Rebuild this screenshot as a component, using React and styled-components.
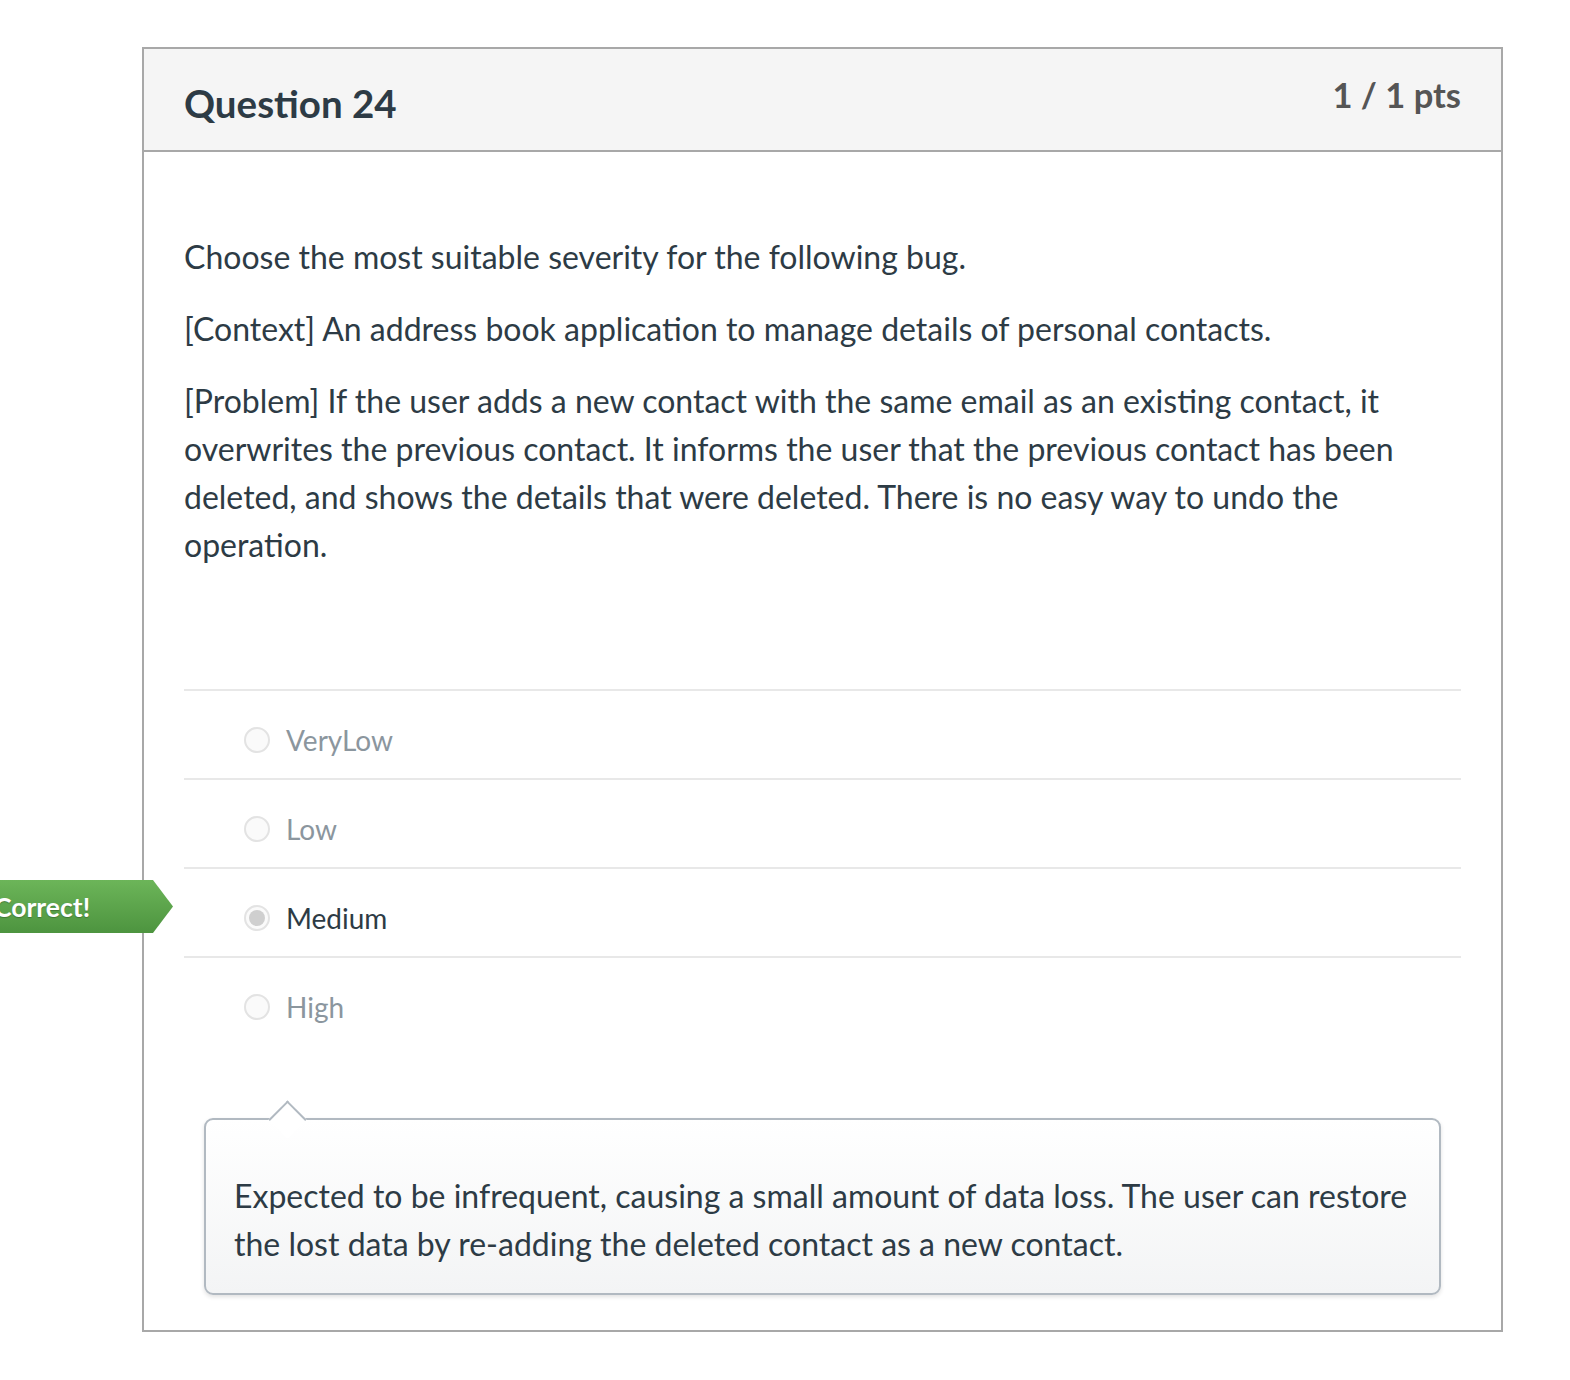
import React from "react";
import styled, { createGlobalStyle } from "styled-components";

const GlobalStyle = createGlobalStyle`
  html, body {
    margin: 0;
    padding: 0;
    background: #fff;
  }
  body {
    font-family: Lato, "Open Sans", "Liberation Sans", sans-serif;
    color: #2d3b45;
  }
`;

const Page = styled.div`
  padding: 47px 66px 50px 142px;
`;

const Card = styled.div`
  width: 1357px;
  border: 2px solid #a8a8a8;
  background: #fff;
`;

const Header = styled.div`
  display: flex;
  justify-content: space-between;
  align-items: flex-start;
  height: 101px;
  padding: 0 40px;
  background: #f5f5f5;
  border-bottom: 2px solid #a8a8a8;
`;

const Title = styled.h2`
  margin: 32px 0 0;
  font-size: 38.5px;
  font-weight: 700;
  line-height: 44px;
  color: #2d3b45;
`;

const Points = styled.div`
  margin-top: 26px;
  font-size: 34.5px;
  font-weight: 700;
  line-height: 40px;
  color: #555;
`;

const Body = styled.div`
  padding: 81px 40px 35px;
`;

const QuestionText = styled.div`
  font-size: 32px;
  line-height: 48px;
  color: #2d3b45;

  p {
    margin: 0;
  }
  p + p {
    margin-top: 24px;
  }
`;

const Answers = styled.div`
  margin-top: 120px;
`;

const AnswerRow = styled.div`
  position: relative;
  display: flex;
  align-items: center;
  border-top: 2px solid #e8e8e8;
  padding: 32px 0 21px 60px;
  font-size: 28px;
  line-height: 34px;
  color: ${({ selected }) => (selected ? "#2d3b45" : "#8b969e")};
`;

const Radio = styled.span`
  position: relative;
  width: 22px;
  height: 22px;
  border-radius: 50%;
  border: 2px solid #e3e3e3;
  background: #fafafa;
  margin-right: 16px;
  flex-shrink: 0;

  &::after {
    content: "";
    display: ${({ checked }) => (checked ? "block" : "none")};
    position: absolute;
    left: 3px;
    top: 3px;
    width: 16px;
    height: 16px;
    border-radius: 50%;
    background: #cfcfcf;
  }
`;

const Flag = styled.div`
  position: absolute;
  left: -200px;
  top: 11px;
  width: 189px;
  height: 53px;
  box-sizing: border-box;
  padding-left: 10px;
  display: flex;
  align-items: center;
  background: linear-gradient(#6cb559, #4d943f);
  clip-path: polygon(0 0, 169px 0, 100% 50%, 169px 100%, 0 100%);
  color: #fff;
  font-size: 26.5px;
  font-weight: 700;
  text-shadow: 0 1px 1px rgba(0, 0, 0, 0.25);
`;

const Comment = styled.div`
  position: relative;
  margin: 73px 20px 0;
  padding: 52px 28px 25px;
  border: 2px solid #b1b9c1;
  border-radius: 9px;
  background: linear-gradient(#ffffff, #f3f4f5);
  box-shadow: 0 2px 4px rgba(0, 0, 0, 0.12);
  font-size: 32px;
  line-height: 48px;
  color: #2d3b45;

  &::before {
    content: "";
    position: absolute;
    left: 68px;
    top: -14px;
    width: 25px;
    height: 25px;
    background: #fff;
    border-top: 2px solid #b1b9c1;
    border-left: 2px solid #b1b9c1;
    transform: rotate(45deg);
  }
`;

const answers = [
  { label: "VeryLow" },
  { label: "Low" },
  { label: "Medium", selected: true, correct: true },
  { label: "High" },
];

export default function App() {
  return (
    <Page>
      <GlobalStyle />
      <Card>
        <Header>
          <Title>Question 24</Title>
          <Points>1 / 1 pts</Points>
        </Header>
        <Body>
          <QuestionText>
            <p>Choose the most suitable severity for the following bug.</p>
            <p>
              [Context] An address book application to manage details of
              personal contacts.
            </p>
            <p>
              [Problem] If the user adds a new contact with the same email as
              an existing contact, it overwrites the previous contact. It
              informs the user that the previous contact has been deleted, and
              shows the details that were deleted. There is no easy way to undo
              the operation.
            </p>
          </QuestionText>
          <Answers>
            {answers.map((a) => (
              <AnswerRow key={a.label} selected={a.selected}>
                {a.correct && <Flag>Correct!</Flag>}
                <Radio checked={a.selected} />
                {a.label}
              </AnswerRow>
            ))}
          </Answers>
          <Comment>
            Expected to be infrequent, causing a small amount of data loss. The
            user can restore the lost data by re-adding the deleted contact as
            a new contact.
          </Comment>
        </Body>
      </Card>
    </Page>
  );
}
